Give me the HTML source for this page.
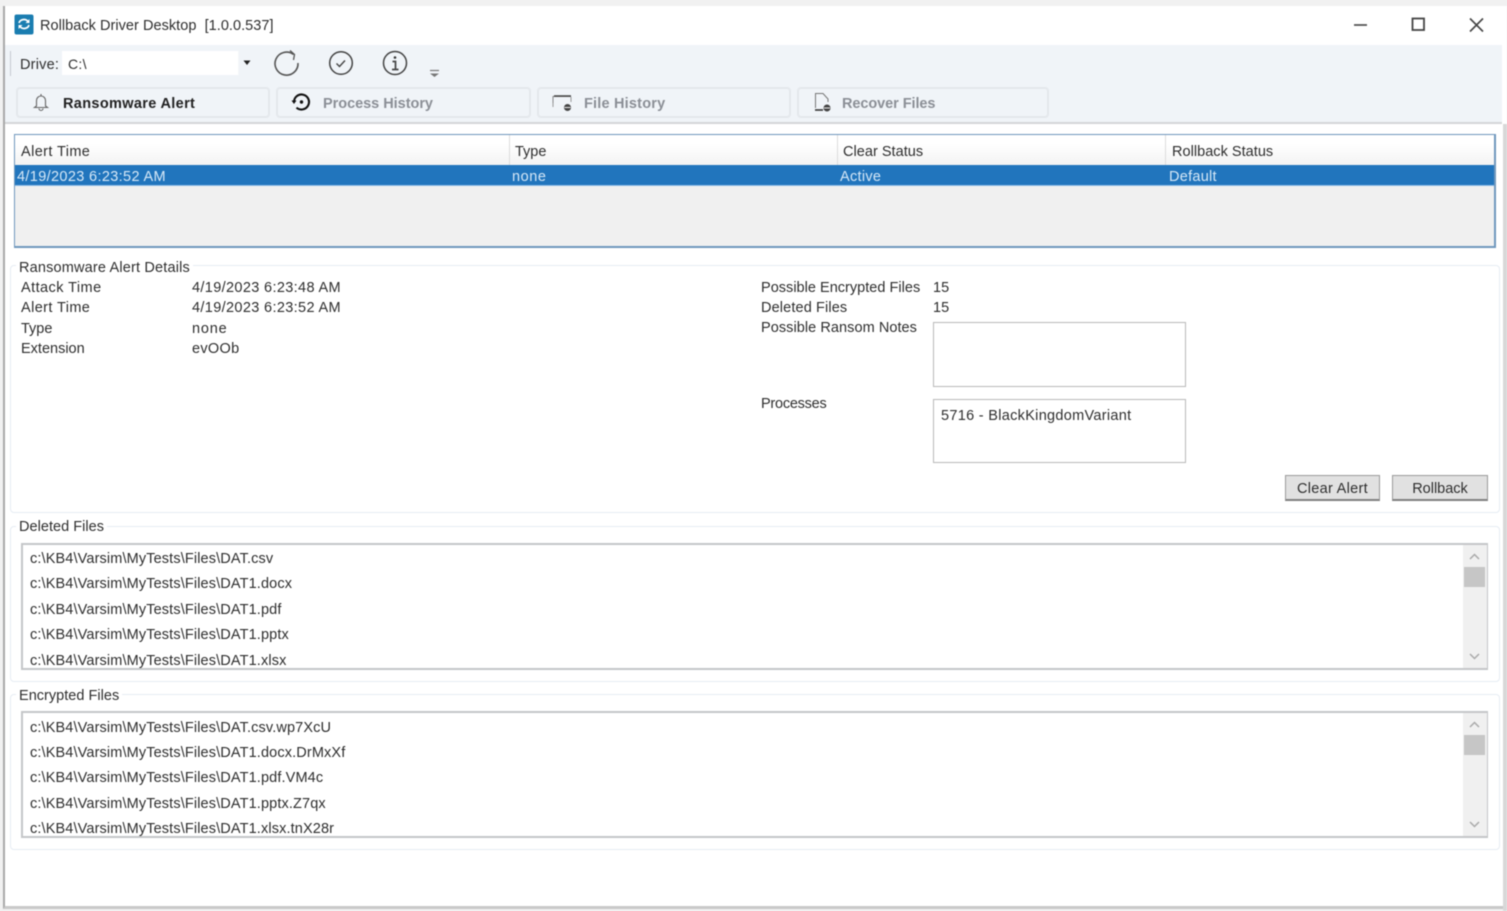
<!DOCTYPE html>
<html><head><meta charset="utf-8"><style>
html,body{margin:0;padding:0;width:1507px;height:911px;overflow:hidden;background:#f1f1f1}
#r{position:absolute;left:0;top:0;width:1507px;height:911px;overflow:hidden;filter:blur(.5px);font-family:"Liberation Sans",sans-serif;font-size:14.5px;color:#2e2e2e}
.a{position:absolute;box-sizing:border-box}
.t{position:absolute;white-space:nowrap;line-height:18px;height:18px}
.g{position:absolute;box-sizing:border-box;border:1px solid #e6ecf3;border-radius:4px}
.b{position:absolute;box-sizing:border-box;background:#f0f4f8;border:2px solid #e4e8ec;border-radius:4px;top:87px;height:31px}
.l{position:absolute;font-weight:bold;color:#8b8f96;top:95px;line-height:18px;white-space:nowrap}
.box{position:absolute;box-sizing:border-box;background:#fff;border:1px solid #b8b8b8}
.btn{position:absolute;box-sizing:border-box;background:#e1e1e1;border:1px solid #9a9a9a;border-bottom:2px solid #808080;text-align:center;top:475px;height:26px;line-height:27px}
.list{position:absolute;box-sizing:border-box;left:21px;width:1467px;height:127px;background:#fff;border:2px solid #c4c6c8;border-right-width:1px;overflow:hidden}
.list .t{left:7px;letter-spacing:.13px}
.sb{position:absolute;right:0;top:0;width:24px;height:100%;background:#f0f0f0}
.sb i{position:absolute;left:1px;top:22px;width:21px;height:20px;background:#c6c6c6}
</style></head><body><div id="r">
<div class="a" style="left:3px;top:6px;width:1504px;height:903px;background:#fff;border-left:2px solid #a9a9a9;border-bottom:3px solid #c9c9c9"></div>
<div class="a" style="left:5px;top:45px;width:1497px;height:79px;background:#f0f4f8;border-bottom:2px solid #d4d6d8"></div>
<div class="a" style="left:1503px;top:124px;width:4px;height:787px;background:#d8d8d8"></div>

<svg class="a" style="left:14px;top:14px" width="20" height="21" viewBox="0 0 20 21"><rect x="0.5" y="0.5" width="19" height="20" rx="2" fill="#1a7db0"/><path d="M5 9a5 4.500 0 0 1 9-1.500M15 11a5 4.500 0 0 1-9 1.500" fill="none" stroke="#fff" stroke-width="1.700"/><path d="M15.500 5v4h-4zM4.500 15v-4h4z" fill="#fff"/></svg>
<div class="t" style="left:40px;top:17px;letter-spacing:.04px">Rollback Driver Desktop&nbsp; [1.0.0.537]</div>

<svg class="a" style="left:1350px;top:12px" width="140" height="26" viewBox="0 0 140 26" fill="none" stroke="#444" stroke-width="1.600"><path d="M4 13h13"/><rect x="62.500" y="6.500" width="11.500" height="11.500" stroke-width="1.800"/><path d="M120 6.500l13 13M133 6.500l-13 13"/></svg>

<div class="a" style="left:10px;top:51px;width:1px;height:25px;background:#c5cad0"></div>
<div class="a" style="left:62px;top:51px;width:176px;height:24px;background:#fff"></div>
<div class="a" style="left:238px;top:51px;width:1px;height:24px;background:#f6f8fa"></div>
<div class="t" style="left:20px;top:56px;letter-spacing:.2px">Drive:</div>
<div class="t" style="left:68px;top:55px;font-size:14px;letter-spacing:.3px">C:\</div>
<svg class="a" style="left:243px;top:60px" width="9" height="6"><path d="M0.500 0.500h7l-3.500 4.500z" fill="#222"/></svg>

<svg class="a" style="left:272px;top:48px" width="30" height="30" viewBox="0 0 30 30" fill="none" stroke="#555" stroke-width="1.600"><path d="M21.500 6.500A11.500 11.500 0 1 0 26 15"/><path d="M18 2.500l4.500 4-1 5.500" stroke-width="1.300"/></svg>
<svg class="a" style="left:328px;top:50px" width="26" height="26" viewBox="0 0 26 26" fill="none" stroke="#444"><circle cx="13" cy="13" r="11.300" stroke-width="1.500"/><path d="M8.500 13.500l3 3 5.500-6" stroke-width="1.400"/></svg>
<svg class="a" style="left:382px;top:50px" width="26" height="26" viewBox="0 0 26 26" fill="none" stroke="#444"><circle cx="13" cy="13" r="11.500" stroke-width="1.500"/><circle cx="13" cy="7.500" r="1.300" fill="#333" stroke="none"/><path d="M10.500 11.500h3v7.500M10 19.500h6.500" stroke-width="1.700"/></svg>
<svg class="a" style="left:429px;top:69px" width="11" height="9" viewBox="0 0 11 9" fill="none"><path d="M1 1.500h9" stroke="#777" stroke-width="1.200"/><path d="M1 4.500h9l-4.500 3.500z" fill="#777"/></svg>

<div class="b" style="left:16px;width:254px"></div>
<div class="b" style="left:276px;width:255px"></div>
<div class="b" style="left:537px;width:254px"></div>
<div class="b" style="left:797px;width:252px"></div>

<svg class="a" style="left:32px;top:92px" width="18" height="20" viewBox="0 0 18 20" fill="none" stroke="#666" stroke-width="1.100"><path d="M4.500 14V8.500a4.500 4.500 0 0 1 9 0V14l2 1.500h-13zM9 2v2M7 16.500a2 2 0 0 0 4 0"/></svg>
<div class="l" style="left:63px;color:#222;letter-spacing:.34px">Ransomware Alert</div>
<svg class="a" style="left:291px;top:92px" width="20" height="20" viewBox="0 0 20 20" fill="none" stroke="#111" stroke-width="2.100"><path d="M3 10a7.500 7.500 0 1 1 2.500 5.600"/><path d="M0.500 8.500h5l-2.500 3.500z" fill="#111" stroke="none"/><circle cx="10.500" cy="10" r="1.700" fill="#111" stroke="none"/></svg>
<div class="l" style="left:323px;letter-spacing:-.03px">Process History</div>
<svg class="a" style="left:551px;top:93px" width="22" height="20" viewBox="0 0 22 20" fill="none"><path d="M2 10V3.500h18" stroke="#888" stroke-width="1"/><path d="M3 3h17" stroke="#444" stroke-width="1.600"/><path d="M20 4v5M2 10v4" stroke="#999"/><circle cx="16.500" cy="14.500" r="3.500" fill="#444"/><path d="M13.500 14.500h6" stroke="#eee"/></svg>
<div class="l" style="left:584px;letter-spacing:.2px">File History</div>
<svg class="a" style="left:812px;top:91px" width="22" height="22" viewBox="0 0 22 22" fill="none"><path d="M3.500 17V2.500H11l5 5.500v3" stroke="#777" stroke-width="1"/><path d="M3 19h8" stroke="#333" stroke-width="1.600"/><circle cx="15" cy="17" r="3.500" fill="#444"/><path d="M12 17h6" stroke="#eee"/></svg>
<div class="l" style="left:842px;letter-spacing:-.07px">Recover Files</div>

<!-- alert table -->
<div class="a" style="left:14px;top:134px;width:1482px;height:114px;background:#f0f0f0;border:1px solid #6f97bd;border-width:1px 2px 2px 1px"></div>
<div class="a" style="left:15px;top:135px;width:1479px;height:30px;background:linear-gradient(#fff 30%,#f3f3f3)"></div>
<div class="a" style="left:509px;top:135px;width:1px;height:30px;background:#dcdcdc"></div>
<div class="a" style="left:837px;top:135px;width:1px;height:30px;background:#dcdcdc"></div>
<div class="a" style="left:1165px;top:135px;width:1px;height:30px;background:#dcdcdc"></div>
<div class="t" style="left:21px;top:143px;letter-spacing:.4px">Alert Time</div>
<div class="t" style="left:515px;top:143px">Type</div>
<div class="t" style="left:843px;top:143px;letter-spacing:.03px">Clear Status</div>
<div class="t" style="left:1172px;top:143px;letter-spacing:.03px">Rollback Status</div>
<div class="a" style="left:15px;top:165px;width:1479px;height:21px;background:#2175bd;border-bottom:1px solid #8ebde6"></div>
<div class="t" style="left:17px;top:168px;color:#d6e8f7;letter-spacing:.35px">4/19/2023 6:23:52 AM</div>
<div class="t" style="left:512px;top:168px;color:#d6e8f7;letter-spacing:.55px">none</div>
<div class="t" style="left:840px;top:168px;color:#d6e8f7;letter-spacing:.3px">Active</div>
<div class="t" style="left:1169px;top:168px;color:#d6e8f7;letter-spacing:.27px">Default</div>

<!-- details -->
<div class="g" style="left:10px;top:265px;width:1490px;height:248px"></div>
<div class="t" style="left:16px;top:259px;background:#fff;padding:0 3px;letter-spacing:.17px">Ransomware Alert Details</div>
<div class="t" style="left:21px;top:279px;letter-spacing:.44px">Attack Time</div>
<div class="t" style="left:21px;top:299px;letter-spacing:.4px">Alert Time</div>
<div class="t" style="left:21px;top:320px">Type</div>
<div class="t" style="left:21px;top:340px">Extension</div>
<div class="t" style="left:192px;top:279px;letter-spacing:.35px">4/19/2023 6:23:48 AM</div>
<div class="t" style="left:192px;top:299px;letter-spacing:.35px">4/19/2023 6:23:52 AM</div>
<div class="t" style="left:192px;top:320px;letter-spacing:.8px">none</div>
<div class="t" style="left:192px;top:340px;letter-spacing:.3px">evOOb</div>

<div class="t" style="left:761px;top:279px;letter-spacing:.02px">Possible Encrypted Files</div>
<div class="t" style="left:761px;top:299px;letter-spacing:.13px">Deleted Files</div>
<div class="t" style="left:761px;top:319px;letter-spacing:.06px">Possible Ransom Notes</div>
<div class="t" style="left:761px;top:395px;letter-spacing:-.25px">Processes</div>
<div class="t" style="left:933px;top:279px">15</div>
<div class="t" style="left:933px;top:299px">15</div>
<div class="box" style="left:933px;top:322px;width:253px;height:65px"></div>
<div class="box" style="left:933px;top:399px;width:253px;height:64px"></div>
<div class="t" style="left:941px;top:407px;letter-spacing:.3px">5716 - BlackKingdomVariant</div>
<div class="btn" style="left:1285px;width:95px;letter-spacing:.3px">Clear Alert</div>
<div class="btn" style="left:1392px;width:96px">Rollback</div>

<!-- deleted -->
<div class="g" style="left:10px;top:526px;width:1490px;height:156px"></div>
<div class="t" style="left:16px;top:518px;background:#fff;padding:0 3px;letter-spacing:.03px">Deleted Files</div>
<div class="list" style="top:543px">
<div class="t" style="top:5px">c:\KB4\Varsim\MyTests\Files\DAT.csv</div>
<div class="t" style="top:30px">c:\KB4\Varsim\MyTests\Files\DAT1.docx</div>
<div class="t" style="top:56px">c:\KB4\Varsim\MyTests\Files\DAT1.pdf</div>
<div class="t" style="top:81px">c:\KB4\Varsim\MyTests\Files\DAT1.pptx</div>
<div class="t" style="top:107px">c:\KB4\Varsim\MyTests\Files\DAT1.xlsx</div>
<div class="sb"><i></i><svg style="position:absolute;left:6px;top:8px" width="11" height="8" fill="none" stroke="#aaa" stroke-width="1.500"><path d="M1 6l4.500-4.500L10 6"/></svg><svg style="position:absolute;left:6px;top:107px" width="11" height="8" fill="none" stroke="#aaa" stroke-width="1.500"><path d="M1 2l4.500 4.500L10 2"/></svg></div>
</div>

<!-- encrypted -->
<div class="g" style="left:10px;top:694px;width:1490px;height:156px"></div>
<div class="t" style="left:16px;top:687px;background:#fff;padding:0 3px;letter-spacing:.02px">Encrypted Files</div>
<div class="list" style="top:711px">
<div class="t" style="top:6px">c:\KB4\Varsim\MyTests\Files\DAT.csv.wp7XcU</div>
<div class="t" style="top:31px">c:\KB4\Varsim\MyTests\Files\DAT1.docx.DrMxXf</div>
<div class="t" style="top:56px">c:\KB4\Varsim\MyTests\Files\DAT1.pdf.VM4c</div>
<div class="t" style="top:82px">c:\KB4\Varsim\MyTests\Files\DAT1.pptx.Z7qx</div>
<div class="t" style="top:107px">c:\KB4\Varsim\MyTests\Files\DAT1.xlsx.tnX28r</div>
<div class="sb"><i></i><svg style="position:absolute;left:6px;top:8px" width="11" height="8" fill="none" stroke="#aaa" stroke-width="1.500"><path d="M1 6l4.500-4.500L10 6"/></svg><svg style="position:absolute;left:6px;top:107px" width="11" height="8" fill="none" stroke="#aaa" stroke-width="1.500"><path d="M1 2l4.500 4.500L10 2"/></svg></div>
</div>
</div></body></html>
